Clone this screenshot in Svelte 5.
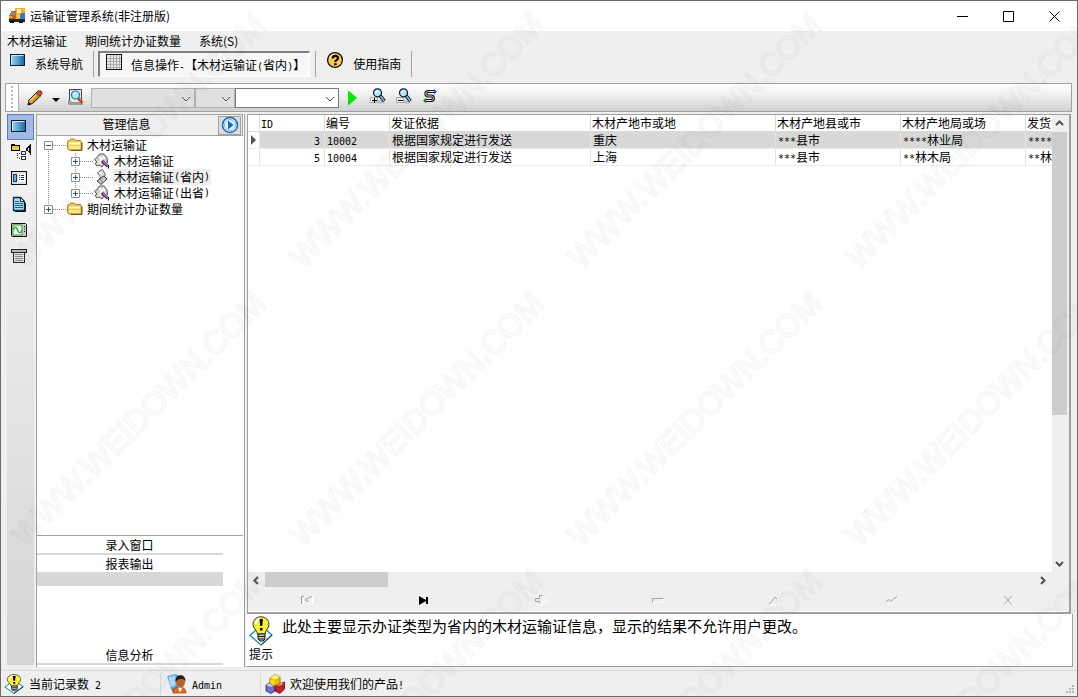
<script>
  const menus = ['木材运输证', '期间统计办证数量', '系统(S)']

  const columns = [
    { label: 'ID', width: 65 },
    { label: '编号', width: 65 },
    { label: '发证依据', width: 201 },
    { label: '木材产地市或地', width: 185 },
    { label: '木材产地县或市', width: 125 },
    { label: '木材产地局或场', width: 125 },
    { label: '发货', width: 125 }
  ]

  const rows = [
    ['3', '10002', '根据国家规定进行发送', '重庆', '***县市', '****林业局', '****'],
    ['5', '10004', '根据国家规定进行发送', '上海', '***县市', '**林木局', '**林']
  ]

  const rail = [
    { name: 'screen', label: '导航' },
    { name: 'tree', label: '结构' },
    { name: 'form', label: '表单' },
    { name: 'doc', label: '文档' },
    { name: 'chart', label: '图表' },
    { name: 'print', label: '打印' }
  ]

  const tree = [
    {
      label: '木材运输证',
      icon: 'folder',
      children: [
        { label: '木材运输证', icon: 'stamp' },
        { label: '木材运输证(省内)', icon: 'sheets' },
        { label: '木材运输证(出省)', icon: 'stamp' }
      ]
    },
    { label: '期间统计办证数量', icon: 'folder' }
  ]

  // disabled glyphs are embossed: grey strokes over white ones
  const navigator = [
    { name: 'first', label: '首记录', dark: 'M1.500 9V1.500H4M12 1.500L6 4l-1 1 4 2', light: 'M12.500 2v8L7 7M3.500 2v7.500H2' },
    { name: 'last', label: '末记录' },
    { name: 'add', label: '新增', dark: 'M5.500 3.500v-3h3M5.500 3.500h-4v3h4v2', light: 'M8.500 1v3h3v3h-3v3h-3v-2' },
    { name: 'remove', label: '删除', dark: 'M1.500 7V3.500h11', light: 'M12.500 4v3.500H2' },
    { name: 'edit', label: '编辑', dark: 'M1 8.500h1L7 2l2 2', light: 'M9 3l3.500 6.500H2' },
    { name: 'post', label: '保存', dark: 'M1 6.500L3 5h2M5.500 6.500L12 1.500', light: 'M2 7.500l3 3 8-8.500' },
    { name: 'cancel', label: '取消', dark: 'M2 1l8 8.500M10 1L2 9.500', light: 'M11.500 2L8 5.500l3.500 4M3 10.500L6 7' }
  ]

  let activeRow = $state(0)
  let activeRail = $state('screen')
  let activeNode = $state('木材运输证(省内)')
  let open = $state(true)

  // half-width characters are set in a smaller fixed-pitch face
  function runs(text) {
    return text.match(/[\x20-\x7e]+|[^\x20-\x7e]+/g) || []
  }
</script>

{#snippet mixed(text)}{#each runs(text) as run}{#if run.charCodeAt(0) < 127}<span class="half">{run}</span>{:else}{run}{/if}{/each}{/snippet}

{#snippet icon(name)}
  {#if name === 'app'}
    <svg width="16" height="16" viewBox="0 0 16 16" shape-rendering="crispEdges">
      <path d="M6 0h10v11H6z" fill="#f8b018" />
      <path d="M8 1h4v4H8z" fill="#fff0c0" />
      <path d="M12 5h4v6h-5V8z" fill="#3a78e0" />
      <path d="M8 6h3v4H8z" fill="#f8d048" />
      <path d="M2 3h5v9H0V7h1V5h1z" fill="#b86820" />
      <path d="M3 4h3v3H2z" fill="#7e8ca8" />
      <path d="M0 8h3v2H0z" fill="#e8a848" />
      <path d="M0 11h16v3H0z" fill="#26262e" />
      <path d="M1 13h4v2H1zM10 13h4v2h-4z" fill="#111" />
    </svg>
  {:else if name === 'screen'}
    <svg width="16" height="16" viewBox="0 0 16 16">
      <defs>
        <linearGradient id="screenFill">
          <stop offset="0" stop-color="#9fd8f4" />
          <stop offset="1" stop-color="#1668a8" />
        </linearGradient>
      </defs>
      <rect x="0.5" y="2.5" width="14" height="11" fill="url(#screenFill)" stroke="#0c1c2c" />
      <path d="M1.500 12.500v-9h12" fill="none" stroke="#c8ecfc" />
    </svg>
  {:else if name === 'grid'}
    <svg width="16" height="16" viewBox="0 0 16 16" shape-rendering="crispEdges">
      <path d="M0 0h16v16H0z" fill="#111" />
      <path d="M1 1h14v14H1z" fill="#e8e8e8" />
      <path d="M4 1h1v14H4zM7 1h1v14H7zM10 1h1v14h-1zM13 1h1v14h-1zM1 4h14v1H1zM1 7h14v1H1zM1 10h14v1H1zM1 13h14v1H1z" fill="#aaa" />
    </svg>
  {:else if name === 'help'}
    <svg width="17" height="17" viewBox="0 0 17 17">
      <circle cx="8" cy="8" r="7.400" fill="#f8c850" stroke="#181008" stroke-width="1.300" />
      <path d="M3 7a5 5 0 0 1 5-4.500" fill="none" stroke="#fff4c0" stroke-width="1.500" />
      <path d="M5.500 6.500C5.500 3 11 3 11 6.200C11 8 8.300 7.800 8.300 10" fill="none" stroke="#000" stroke-width="2.200" />
      <path d="M7.200 11.200h2.400v2H7.200z" fill="#000" />
    </svg>
  {:else if name === 'pencil'}
    <svg width="16" height="16" viewBox="0 0 16 16">
      <path d="M1 15l1-5 8-8 4 3.500-8.500 8z" fill="#f0a830" stroke="#1c1408" />
      <path d="M3 10.500l7-7" stroke="#fff0a0" />
      <path d="M5 12.500l7-7" stroke="#a86010" />
      <path d="M9 3l2-2.200 3 .2 1.200 2.500L13 6z" fill="#e84828" stroke="#501008" stroke-width="0.800" />
      <path d="M8.500 3.500l4 3.500" stroke="#60a060" stroke-width="1.500" />
      <path d="M1 15l.700-3L4 14z" fill="#000" />
    </svg>
  {:else if name === 'preview'}
    <svg width="16" height="16" viewBox="0 0 16 16">
      <path d="M1.500.500h12v14H2l-.500-1z" fill="#e8ece8" stroke="#444" />
      <path d="M0 11v4l1 1h14v-3H5z" fill="#999" />
      <path d="M10 9l4.500 4.500" stroke="#c03010" stroke-width="3" />
      <path d="M10.500 8.500l4.500 4.500" stroke="#f0a050" />
      <circle cx="7.500" cy="6" r="4" fill="#a8ecfc" stroke="#2474a8" stroke-width="1.200" />
      <path d="M5.500 5.500l2-2" stroke="#fff" stroke-width="1.500" />
    </svg>
  {:else if name === 'zoomIn' || name === 'zoomOut'}
    <svg width="16" height="16" viewBox="0 0 16 16">
      <path d="M.500 9.500h7v5h-7z" fill="#eee" stroke="#aaa" />
      <path d="M8 12.500h6.500v3H8z" fill="#bbb" />
      <path d="M10 7.500l4.300 5.500" stroke="#081830" stroke-width="3.600" />
      <path d="M10.500 8l3.500 4.700" stroke="#78c8ec" stroke-width="1.600" />
      <circle cx="7.500" cy="4.800" r="4" fill="#b4e8fc" stroke="#081830" stroke-width="1.200" />
      <path d="M5.500 4.500l2-2" stroke="#fff" stroke-width="1.500" />
      <path d="M2 12.500h5" stroke="#000" />
      {#if name === 'zoomIn'}<path d="M4.500 10v5" stroke="#000" />{/if}
    </svg>
  {:else if name === 'refresh'}
    <svg width="16" height="16" viewBox="0 0 16 16">
      <path d="M12 2.500H6.500C3 2.500 3 7 6.500 7h3C12 7 12 11.500 9.500 11.500H4" fill="none" stroke="#111" stroke-width="3" />
      <path d="M12 2.500H6.500C3 2.500 3 7 6.500 7h3C12 7 12 11.500 9.500 11.500H4" fill="none" stroke="#e8e8e8" stroke-width="1" />
      <path d="M12 0l3 2.500-3 3z" fill="#1850e8" />
      <path d="M4 9L1 11.500l3 3z" fill="#108820" />
    </svg>
  {:else if name === 'tree'}
    <svg width="20" height="16" viewBox="0 0 20 16" shape-rendering="crispEdges">
      <path d="M0 0h4v1h5v6H0z" fill="#000" />
      <path d="M1 2h7v4H1z" fill="#f8c838" />
      <path d="M6 9h1v1H6zM6 11h1v1H6zM6 13h1v1H6zM8 9h1v1H8zM8 14h1v1H8z" fill="#333" />
      <path d="M10 7h5v4h-5zM10 12h5v4h-5z" fill="#333" />
      <path d="M11 8h3v2h-3zM11 13h3v2h-3z" fill="#eee" />
      <path d="M19 0h1v11h-1v-2h-1V8h-1V7h-2V4h1V3h1V2h1V1h1z" fill="#111" />
      <path d="M17 4h1v3h-1z" fill="#ddd" />
    </svg>
  {:else if name === 'form'}
    <svg width="16" height="16" viewBox="0 0 16 16" shape-rendering="crispEdges">
      <path d="M0 1h16v14H0z" fill="#111" />
      <path d="M1 2h14v12H1z" fill="#ddd" />
      <path d="M2 4h4v8H2z" fill="#143c60" />
      <path d="M3 5h2v6H3z" fill="#58b8e8" />
      <path d="M7 4h7v8H7z" fill="#fff" />
      <path d="M8 5h1v1H8zM10 5h3v1h-3zM8 7h1v1H8zM10 7h3v1h-3zM8 9h1v1H8zM10 9h3v1h-3z" fill="#333" />
    </svg>
  {:else if name === 'doc'}
    <svg width="16" height="16" viewBox="0 0 16 16">
      <path d="M2.500 1.500h7l4 4v9h-11z" fill="#a8dcf8" stroke="#082840" stroke-width="1.300" />
      <path d="M9.500 1.500v4h4z" fill="#fff" stroke="#082840" />
      <path d="M4 5.500h4M4 7.500h8M4 9.500h8M4 11.500h8" stroke="#186090" />
      <path d="M14.500 7v8.500H4" fill="none" stroke="#111" />
    </svg>
  {:else if name === 'chart'}
    <svg width="16" height="16" viewBox="0 0 16 16">
      <path d="M.500 1.500h14l1 1v12H1l-.500-1z" fill="#ccc" stroke="#111" />
      <path d="M2 3h9v10H2z" fill="#f4fff4" stroke="#289838" />
      <path d="M2.500 8C4 3.500 5.500 5 6.500 8s2.500 4 4.500.500" fill="none" stroke="#18a028" stroke-width="1.300" />
      <path d="M13 4h1v1h-1zM13 6.500h1v1h-1zM13 9h1v1h-1z" fill="#111" />
    </svg>
  {:else if name === 'print'}
    <svg width="16" height="16" viewBox="0 0 16 16" shape-rendering="crispEdges">
      <path d="M0 1h16v4h-2v10H2V5H0z" fill="#222" />
      <path d="M1 2h14v2H1z" fill="#bbb" />
      <path d="M3 5h10v9H3z" fill="#e8e8e8" />
      <path d="M4 6h8v1H4zM4 8h8v1H4zM4 10h8v1H4zM4 12h8v1H4z" fill="#888" />
    </svg>
  {:else if name === 'folder'}
    <svg width="16" height="14" viewBox="0 0 16 14">
      <path d="M.500 10.500V4l1-1.500h1l1-1.500h4l1 1.500h5l1 1.500v7l-1 1H2z" fill="#f0cc58" stroke="#a88424" />
      <path d="M2 5.500h11" stroke="#fffce0" stroke-width="2" />
      <path d="M2 8h11v3H2z" fill="#fce890" />
      <path d="M15 5v7.500H4" fill="none" stroke="#6c5210" />
    </svg>
  {:else if name === 'stamp'}
    <svg width="16" height="16" viewBox="0 0 16 16">
      <path d="M.500 6.500L4 3.500 5.500 1h4.500l3 4 .500 5-3.500 1-2 3-3-2-2 1-2-2.500 2-1.500z" fill="#d4d4d4" stroke="#555" />
      <path d="M5 4l3 1.500-2 3M4 11l4-3M9 3l2 3" fill="none" stroke="#fff" stroke-width="1.500" />
      <path d="M8 8l6 5.500" stroke="#48185c" stroke-width="3" />
      <path d="M9 8.500l5 4.500" stroke="#c878dc" stroke-width="1.200" />
      <path d="M14.500 12v3.500" stroke="#111" />
    </svg>
  {:else if name === 'sheets'}
    <svg width="16" height="16" viewBox="0 0 16 16">
      <path d="M3.500 3.500l5-3 3 5.500-4.500 3z" fill="#e4e4e4" stroke="#666" />
      <path d="M3 12l7-5 3 3-6 5.500z" fill="#ccc" stroke="#444" />
      <path d="M5 8.500l3.500 5" stroke="#777" />
      <path d="M5 4l3.500-2" stroke="#fff" />
    </svg>
  {:else if name === 'bulb'}
    <svg width="24" height="30" viewBox="0 0 24 30" preserveAspectRatio="none">
      <path d="M1 19.500l11-10 11 9.500-11 10z" fill="#fff" stroke="#1090a0" stroke-width="1.300" />
      <path d="M12 29l11-10" stroke="#222" />
      <path d="M12 .800c5 0 8 3.500 8 7.600 0 4-3.500 5.500-4 9.600H8.500C8 14 4 12.500 4 8.400 4 4.300 7 .800 12 .800z" fill="#fcf030" stroke="#333" />
      <path d="M7 8c0-3 2-5 4-5" fill="none" stroke="#fff" stroke-width="2" />
      <path d="M10.500 3h3.500l-.800 7h-2zM11 12h2.500v2.500H11z" fill="#000" />
      <path d="M9 18h7v5l-2 2h-3l-2-2z" fill="#ccc" stroke="#111" />
      <path d="M9 20.500h7M9.500 23h6" stroke="#111" />
    </svg>
  {:else if name === 'user'}
    <svg width="20" height="20" viewBox="0 0 20 20">
      <path d="M0 2l9-2 3 2v11l-8 2z" fill="#58a8e8" />
      <path d="M1.500 3l7-1.500v10L3.500 13z" fill="#a8d8fc" />
      <path d="M4 15l6-2v3l-4 2z" fill="#5080b0" />
      <path d="M6 19c0-5 3-6 6.500-6s6.500 1.500 6.500 6z" fill="#e86820" stroke="#a03c0c" stroke-width="0.700" />
      <path d="M11 13.500l2 5 2.500-5z" fill="#fff" />
      <ellipse cx="13.500" cy="8" rx="4.500" ry="5.500" fill="#b46430" />
      <path d="M8.500 8c-1-9 11-9 10 0-.500-2-1.500-3-3-3-2 0-5-.500-7 3z" fill="#241810" />
    </svg>
  {:else if name === 'cubes'}
    <svg width="20" height="20" viewBox="0 0 20 20">
      <path d="M1 11l5-3 4 2v7l-4 2.500L1 17z" fill="#7070cc" stroke="#30306c" stroke-width="0.800" />
      <path d="M1 11l5-2.500 4 2-4 2.500z" fill="#c8c8fc" />
      <path d="M10 12l5-2.500 4.500-1.500v7L15 19.500 10 17z" fill="#c02028" stroke="#600810" stroke-width="0.800" />
      <path d="M11 11l4-2.500 4 .500-4 3z" fill="#f09088" />
      <path d="M5 4l5-3.500L15 3v6.500L10 12 5 9.500z" fill="#f0b808" stroke="#806000" stroke-width="0.800" />
      <path d="M5 4l5-3.500L15 3l-5 2.500z" fill="#fcf470" />
      <path d="M5.500 5l4 1.500v5l-4-2z" fill="#fce020" />
    </svg>
  {/if}
{/snippet}

{#snippet chevron(turn)}
  <svg width="9" height="9" viewBox="0 0 9 9" aria-hidden="true">
    <g transform="rotate({turn} 4.5 4.5)"><path d="M1 6l3.500-3.500L8 6" fill="none" stroke="#505050" stroke-width="2" /></g>
  </svg>
{/snippet}

{#snippet chevronDown()}
  <svg class="arrow" width="10" height="6" viewBox="0 0 10 6" aria-hidden="true">
    <path d="M1 1l4 4 4-4" fill="none" stroke="#505050" />
  </svg>
{/snippet}

{#snippet treeRow(node, expanded)}
  <div class="tree-row">
    <button class="toggle" aria-label={expanded ? '折叠' : '展开'} onclick={() => { if (node.children) open = !open }}>
      <svg width="9" height="9" viewBox="0 0 9 9">
        <path d="M.500.500h8v8h-8z" fill="#fff" stroke="#919191" />
        <path d="M2 4.500h5" stroke="#3050a0" />
        {#if !expanded}<path d="M4.500 2v5" stroke="#3050a0" />{/if}
      </svg>
    </button>
    <span class="dots"></span>
    {@render icon(node.icon)}
    <button class="node" class:selected={activeNode === node.label} onclick={() => (activeNode = node.label)}>{@render mixed(node.label)}</button>
  </div>
{/snippet}

<div class="window">
  <header class="titlebar">
    {@render icon('app')}
    <h1>运输证管理系统(非注册版)</h1>
    <div class="controls">
      <button aria-label="最小化"><svg width="11" height="11"><path d="M0 5.500h11" stroke="#000" /></svg></button>
      <button aria-label="最大化"><svg width="11" height="11"><path d="M.500.500h10v10H.500z" fill="none" stroke="#000" /></svg></button>
      <button aria-label="关闭"><svg width="11" height="11"><path d="M.500.500l10 10M10.500.500l-10 10" stroke="#000" /></svg></button>
    </div>
  </header>

  <nav class="menubar">
    {#each menus as menu}
      <button>{menu}</button>
    {/each}
  </nav>

  <div class="views">
    <button class="view">{@render icon('screen')}<span>系统导航</span></button>
    <button class="view pressed">{@render icon('grid')}<span>{@render mixed('信息操作-【木材运输证(省内)】')}</span></button>
    <button class="view help">{@render icon('help')}<span>使用指南</span></button>
  </div>

  <div class="toolbar">
    <div class="grip"></div>
    <button class="tool" aria-label="编辑">{@render icon('pencil')}</button>
    <button class="tool drop" aria-label="更多"><svg width="8" height="4"><path d="M0 0h8L4 4z" /></svg></button>
    <button class="tool raised" aria-label="预览">{@render icon('preview')}</button>
    <div class="combos">
      <div class="combo field off"><select aria-label="字段" disabled></select>{@render chevronDown()}</div>
      <div class="combo operator off"><select aria-label="条件" disabled></select>{@render chevronDown()}</div>
      <div class="combo value"><select aria-label="值"></select>{@render chevronDown()}</div>
    </div>
    <button class="tool run" aria-label="执行"><svg width="9" height="14"><path d="M0 0h1l8 7-8 7H0z" fill="#00e800" /></svg></button>
    <button class="tool wide" aria-label="放大">{@render icon('zoomIn')}</button>
    <button class="tool wide" aria-label="缩小">{@render icon('zoomOut')}</button>
    <button class="tool raised" aria-label="刷新">{@render icon('refresh')}</button>
  </div>

  <div class="body">
    <div class="rail">
      {#each rail as item}
        <button class:active={activeRail === item.name} aria-label={item.label} onclick={() => (activeRail = item.name)}>
          {@render icon(item.name)}
        </button>
      {/each}
    </div>

    <aside class="panel">
      <div class="panel-head">
        <h2>管理信息</h2>
        <button aria-label="展开">
          <svg width="18" height="18" viewBox="0 0 18 18">
            <circle cx="9" cy="9" r="7.500" fill="#fff" stroke="#1468c0" stroke-width="1.600" />
            <circle cx="9" cy="9" r="5.500" fill="#e4f2fe" stroke="#78b4e8" />
            <path d="M7 4.500v9L12.500 9z" fill="#1468c0" />
          </svg>
        </button>
      </div>

      <ul class="tree">
        {#each tree as node}
          <li>
            {@render treeRow(node, !!node.children && open)}
            {#if node.children && open}
              <ul>
                {#each node.children as child}
                  <li>{@render treeRow(child, false)}</li>
                {/each}
              </ul>
            {/if}
          </li>
        {/each}
      </ul>

      <div class="groups">
        <button>录入窗口</button>
        <button class="current">报表输出</button>
        <div class="group-body"></div>
        <button>信息分析</button>
      </div>
    </aside>

    <main>
      <div class="data">
        <div class="grid-area">
          <div class="grid">
            <table>
              <colgroup>
                <col class="mark-col" />
                {#each columns as column}
                  <col style="width: {column.width}px" />
                {/each}
              </colgroup>
              <thead>
                <tr>
                  <th></th>
                  {#each columns as column}
                    <th>{@render mixed(column.label)}</th>
                  {/each}
                </tr>
              </thead>
              <tbody>
                {#each rows as row, i}
                  <tr class:active={activeRow === i} onclick={() => (activeRow = i)}>
                    <td class="mark">
                      {#if activeRow === i}<svg width="5" height="10"><path d="M0 0l5 5-5 5z" fill="#505050" /></svg>{/if}
                    </td>
                    {#each row as cell, c}
                      <td class:number={c === 0}>{@render mixed(cell)}</td>
                    {/each}
                  </tr>
                {/each}
              </tbody>
            </table>
          </div>
          <div class="vscroll">
            <button aria-label="向上">{@render chevron(0)}</button>
            <div class="track"><div class="thumb"></div></div>
            <button aria-label="向下">{@render chevron(180)}</button>
          </div>
        </div>
        <div class="hscroll">
          <button aria-label="向左">{@render chevron(270)}</button>
          <div class="track"><div class="thumb"></div></div>
          <button aria-label="向右">{@render chevron(90)}</button>
        </div>
        <div class="navigator">
          {#each navigator as item}
            <button aria-label={item.label} disabled={!item.dark}>
              {#if item.dark}
                <svg width="14" height="11" viewBox="0 0 14 11" fill="none">
                  <path d={item.light} stroke="#fff" />
                  <path d={item.dark} stroke="#a0a0a0" />
                </svg>
              {:else}
                <svg width="12" height="9"><path d="M1 0l7 4v1L1 9zM8 1h2v7H8z" fill="#000" /></svg>
              {/if}
            </button>
          {/each}
        </div>
      </div>

      <section class="hint">
        <div class="hint-label">{@render icon('bulb')}<span>提示</span></div>
        <p>此处主要显示办证类型为省内的木材运输证信息，显示的结果不允许用户更改。</p>
      </section>
    </main>
  </div>

  <footer class="status">
    <div class="cell count">
      <span class="small-bulb">{@render icon('bulb')}</span>
      <span>{@render mixed('当前记录数 2')}</span>
    </div>
    <div class="cell account">{@render icon('user')}<span>{@render mixed('Admin')}</span></div>
    <div class="cell">{@render icon('cubes')}<span>{@render mixed('欢迎使用我们的产品!')}</span></div>
    <svg class="resize" width="9" height="9" viewBox="0 0 9 9" aria-hidden="true">
      <path d="M6 0h2v2H6zM3 3h2v2H3zM6 3h2v2H6zM0 6h2v2H0zM3 6h2v2H3zM6 6h2v2H6z" fill="#b8b8b8" />
    </svg>
  </footer>

  <svg class="watermark" aria-hidden="true">
    <defs>
      <pattern id="mark" x="280" y="280" width="278" height="278" patternUnits="userSpaceOnUse">
        <text transform="translate(22 267) rotate(-45)">WWW.WEIDOWN.COM</text>
      </pattern>
    </defs>
    <rect width="100%" height="100%" fill="url(#mark)" />
  </svg>
</div>

<style>
  :global(body) {
    margin: 0;
  }

  .window {
    position: relative;
    display: flex;
    flex-direction: column;
    box-sizing: border-box;
    min-height: 100vh;
    border: 1px solid #6b6b6b;
    background: #efefef;
    color: #000;
    font-family: 'Noto Sans CJK SC', sans-serif;
    font-size: 12px;
    line-height: 16px;
    overflow: hidden;
  }

  button {
    display: flex;
    align-items: center;
    justify-content: center;
    margin: 0;
    padding: 0;
    border: 0;
    background: none;
    color: inherit;
    font: inherit;
    white-space: nowrap;
  }

  svg {
    display: block;
    flex: none;
  }

  h1,
  h2,
  p,
  ul {
    margin: 0;
    padding: 0;
    font-size: 12px;
    font-weight: normal;
    list-style: none;
  }

  .half {
    font-family: 'DejaVu Sans Mono', monospace;
    font-size: 10px;
    line-height: 10px;
    white-space: pre;
  }

  .titlebar {
    display: flex;
    align-items: center;
    height: 30px;
    padding-left: 8px;
    gap: 5px;
    background: #fff;
  }

  .controls {
    display: flex;
    margin-left: auto;
  }

  .controls button {
    width: 46px;
    height: 28px;
  }

  .menubar {
    display: flex;
    gap: 18px;
    height: 20px;
    padding-left: 6px;
  }

  .views {
    display: flex;
    height: 26px;
    padding-bottom: 6px;
    padding-left: 9px;
  }

  .view {
    align-items: flex-start;
    box-sizing: border-box;
    gap: 9px;
    padding: 1px 10px 0 0;
    border-right: 1px solid #a0a0a0;
  }

  .view span {
    padding-top: 4px;
  }

  .view.pressed {
    margin: 0 5px 0 4px;
    padding: 1px 4px 0 6px;
    border: 1px solid #fff;
    border-top: 2px solid #808080;
    border-left: 2px solid #808080;
    background: #f7f7f7;
  }

  .view.pressed span {
    padding-top: 3px;
  }

  .view.help {
    padding: 1px 10px 0 11px;
    border-left: 1px solid #a0a0a0;
  }

  .toolbar {
    display: flex;
    align-items: center;
    box-sizing: border-box;
    height: 29px;
    margin: 0 5px 2px 4px;
    border: 1px solid #a0a0a0;
    background: linear-gradient(#fff, #f0f0f0 40%, #d0d0d0);
  }

  .grip {
    align-self: stretch;
    width: 12px;
    margin-right: 7px;
    border-right: 1px solid #b0b0b0;
    background: radial-gradient(circle at 1px 1px, #b8b8b8 1px, transparent 1px) 5px 2px / 3px 4px repeat-y #fff;
  }

  .tool {
    height: 24px;
    padding: 0 1px;
  }

  .raised {
    padding-bottom: 2px;
  }

  .drop {
    padding: 4px 7px 0 8px;
  }

  .run {
    padding: 0 12px 0 9px;
  }

  .wide {
    padding: 0 9px 4px 1px;
  }

  .combos {
    display: flex;
    margin-left: 6px;
  }

  .combo {
    position: relative;
    height: 20px;
  }

  .combo select {
    display: block;
    width: 100%;
    height: 20px;
    margin: 0;
    border: 1px solid #7a7a7a;
    border-radius: 0;
    background: #fff;
    appearance: none;
  }

  .combo.off select {
    border-color: #b0b0b0;
    background: #e0e0e0;
    opacity: 1;
  }

  .combo .arrow {
    position: absolute;
    top: 8px;
    right: 4px;
    pointer-events: none;
  }

  .field {
    width: 104px;
  }

  .operator {
    width: 40px;
  }

  .value {
    width: 104px;
  }

  .body {
    display: flex;
    flex: 1;
    margin: 0 4px 3px 6px;
  }

  .rail {
    width: 27px;
    margin-bottom: 2px;
    background: linear-gradient(#f4f4f4, #e8e8e8 40%, #d4d4d4);
  }

  .rail button {
    justify-content: flex-start;
    box-sizing: border-box;
    width: 27px;
    height: 26px;
    padding: 0 0 2px 3px;
    border: 1px solid transparent;
  }

  .rail button.active {
    border-color: #5a7ac8;
    background: #a4b8e4;
  }

  .panel {
    display: flex;
    flex-direction: column;
    box-sizing: border-box;
    width: 209px;
    margin-left: 2px;
    padding-bottom: 2px;
    border-right: 1px solid #a0a0a0;
    border-left: 1px solid #a0a0a0;
    background: #fff;
  }

  .panel-head {
    display: flex;
    align-items: center;
    box-sizing: border-box;
    height: 22px;
    margin-right: 1px;
    border: 1px solid #a0a0a0;
    border-left: 0;
    background: #efefef;
  }

  .panel-head h2 {
    flex: 1;
    padding: 0 2px 2px 0;
    text-align: center;
  }

  .panel-head button {
    box-sizing: border-box;
    width: 23px;
    height: 19px;
    margin-right: 1px;
    border: 1px solid #a0a0a0;
    background: #dcdcdc;
  }

  .tree {
    flex: 1;
    padding: 1px 0 0 7px;
  }

  .tree ul {
    padding-left: 27px;
  }

  .tree,
  .tree ul {
    background: repeating-linear-gradient(#909090 0 1px, transparent 1px 2px) no-repeat;
  }

  .tree {
    background-position: 11px 9px;
    background-size: 1px 64px;
  }

  .tree ul {
    background-position: 31px 0;
    background-size: 1px calc(100% - 8px);
  }

  .tree-row {
    display: flex;
    align-items: center;
    height: 16px;
  }

  .dots {
    width: 14px;
    height: 1px;
    background: repeating-linear-gradient(90deg, #909090 0 1px, transparent 1px 2px);
  }

  .node {
    height: 16px;
    margin-left: 3px;
    padding: 0 1px;
  }

  .node.selected {
    background: #efefef;
  }

  .groups {
    margin-right: 1px;
    border-top: 1px solid #a0a0a0;
  }

  .groups button {
    box-sizing: border-box;
    width: 186px;
    height: 18px;
    padding-right: 1px;
    border-bottom: 2px solid #d8d8d8;
  }

  .groups button:first-child {
    height: 19px;
  }

  .groups button.current {
    height: 31px;
    border-bottom: 14px solid #d8d8d8;
  }

  .group-body {
    height: 61px;
  }

  main {
    display: flex;
    flex: 1;
    flex-direction: column;
    min-width: 0;
  }

  .data {
    display: flex;
    flex: 1;
    flex-direction: column;
    margin: 0 2px;
    padding-right: 2px;
    border: 1px solid #a0a0a0;
    border-right-width: 2px;
    border-bottom-width: 2px;
  }

  .grid-area {
    display: flex;
    flex: 1;
  }

  .grid {
    flex: 1;
    min-width: 0;
    overflow: hidden;
    background: #fff;
  }

  table {
    width: 903px;
    border-collapse: separate;
    border-spacing: 0;
    table-layout: fixed;
  }

  .mark-col {
    width: 12px;
  }

  th,
  td {
    box-sizing: border-box;
    height: 17px;
    padding: 0 2px;
    border-right: 1px solid #e4e4e4;
    border-bottom: 1px solid #ececec;
    font-weight: normal;
    line-height: 16px;
    text-align: left;
    white-space: nowrap;
  }

  th {
    padding-left: 1px;
    border-color: #d8d8d8;
  }

  td {
    padding-left: 2px;
  }

  td.number {
    padding-right: 4px;
    text-align: right;
  }

  tr.active td {
    background: #d8d8d8;
  }

  tr td.mark {
    padding: 0 3px;
    background: #fff;
  }

  .vscroll {
    display: flex;
    flex-direction: column;
    width: 15px;
  }

  .vscroll button {
    height: 17px;
  }

  .track {
    flex: 1;
  }

  .thumb {
    background: #cdcdcd;
  }

  .vscroll .thumb {
    height: 67%;
  }

  .hscroll {
    display: flex;
    height: 16px;
    padding-right: 16px;
  }

  .hscroll button {
    width: 17px;
  }

  .hscroll .thumb {
    width: 16%;
    height: 15px;
  }

  .navigator {
    display: flex;
    height: 23px;
    border-bottom: 1px solid #fff;
  }

  .navigator button {
    flex: 1;
    padding-top: 1px;
  }

  .hint {
    display: flex;
    box-sizing: border-box;
    height: 53px;
    margin-left: 1px;
    border-right: 1px solid #a0a0a0;
    border-bottom: 1px solid #a0a0a0;
    background: #fff;
  }

  .hint-label {
    display: flex;
    flex-direction: column;
    width: 33px;
    padding: 2px 0 0 3px;
  }

  .hint p {
    padding: 2px 0 0;
    font-size: 15px;
    line-height: 20px;
  }

  .status {
    display: flex;
    align-items: center;
    height: 25px;
    padding-left: 3px;
    border-top: 1px solid #d8d8d8;
  }

  .cell {
    display: flex;
    align-items: center;
    box-sizing: border-box;
    gap: 5px;
    height: 22px;
    padding-right: 8px;
  }

  .count {
    width: 157px;
    border-right: 1px solid #d8d8d8;
  }

  .account {
    width: 100px;
    margin-right: 4px;
    padding-left: 6px;
    border-right: 1px solid #d8d8d8;
  }

  .small-bulb :global(svg) {
    width: 20px;
    height: 20px;
  }

  .resize {
    align-self: flex-end;
    margin: 0 2px 2px auto;
  }

  .watermark {
    position: absolute;
    inset: 0;
    width: 100%;
    height: 100%;
    pointer-events: none;
  }

  .watermark text {
    fill: none;
    stroke: #000;
    stroke-linejoin: round;
    stroke-opacity: 0.03;
    stroke-width: 2px;
    font-family: 'Liberation Sans', sans-serif;
    font-size: 32px;
  }
</style>
